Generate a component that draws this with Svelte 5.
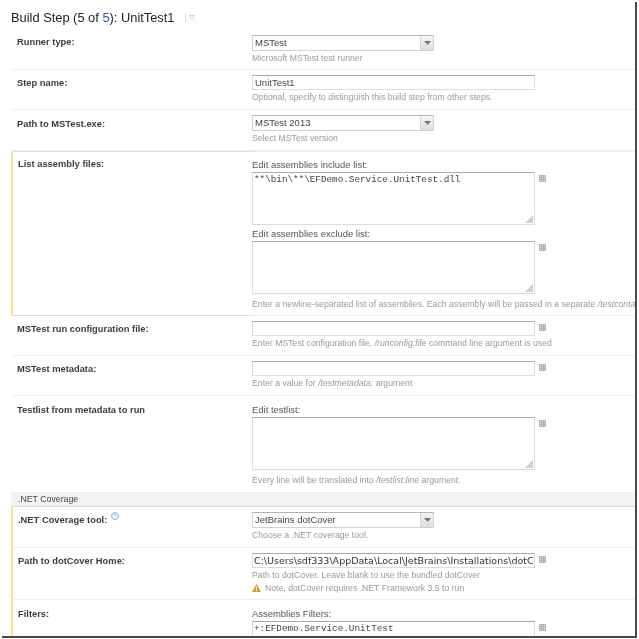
<script>
  const arrow = 'M0 0h7L3.5 4z';
</script>

{#snippet editor()}
  <svg class="editor-icon" width="7" height="7" viewBox="0 0 7 7" aria-hidden="true">
    <rect x="0.5" y="0.5" width="6" height="6" fill="#e2e2e2" stroke="#b4b4b4" />
    <path d="M2.5 1v5M4.5 1v5M1 2.5h5M1 4.5h5" stroke="#b0b0b0" fill="none" />
  </svg>
{/snippet}

{#snippet select(value)}
  <div class="select">
    <span class="select-value">{value}</span>
    <span class="select-btn">
      <svg width="7" height="4" viewBox="0 0 7 4"><path d={arrow} fill="#777" /></svg>
    </span>
  </div>
{/snippet}

{#snippet grip()}
  <svg class="grip" width="8" height="8" viewBox="0 0 8 8" aria-hidden="true">
    <path d="M8 0v8H0z" fill="#cfcfcf" />
  </svg>
{/snippet}

<div class="page">
  <h2 class="title">
    Build Step (5 of <span class="link">5</span>): UnitTest1
    <span class="sep"></span>
    <svg class="chevron" width="6" height="5" viewBox="0 0 6 5"><path d="M0.5 0.5h5L3 4.5z" fill="none" stroke="#c4d0dc" /></svg>
  </h2>

  <section class="row r-runner">
    <div class="label">Runner type:</div>
    <div class="field">
      {@render select('MSTest')}
      <div class="hint">Microsoft MSTest test runner</div>
    </div>
  </section>

  <section class="row r-step">
    <div class="label">Step name:</div>
    <div class="field">
      <div class="line"><div class="input sans">UnitTest1</div></div>
      <div class="hint">Optional, specify to distinguish this build step from other steps.</div>
    </div>
  </section>

  <section class="row r-path">
    <div class="label">Path to MSTest.exe:</div>
    <div class="field">
      {@render select('MSTest 2013')}
      <div class="hint">Select MSTest version</div>
    </div>
  </section>

  <section class="row r-list flagged">
    <div class="label">List assembly files:</div>
    <div class="field">
      <div class="caption">Edit assemblies include list:</div>
      <div class="line">
        <div class="textarea mono">**\bin\**\EFDemo.Service.UnitTest.dll{@render grip()}</div>
        {@render editor()}
      </div>
      <div class="caption second">Edit assemblies exclude list:</div>
      <div class="line">
        <div class="textarea">{@render grip()}</div>
        {@render editor()}
      </div>
      <div class="hint after-area">Enter a newline-separated list of assemblies. Each assembly will be passed in a separate <i>/testcontainer:</i> argument.</div>
    </div>
  </section>

  <section class="row r-plain">
    <div class="label">MSTest run configuration file:</div>
    <div class="field">
      <div class="line"><div class="input"></div>{@render editor()}</div>
      <div class="hint">Enter MSTest configuration file. <i>/runconfig:file</i> command line argument is used</div>
    </div>
  </section>

  <section class="row r-plain">
    <div class="label">MSTest metadata:</div>
    <div class="field">
      <div class="line"><div class="input"></div>{@render editor()}</div>
      <div class="hint">Enter a value for <i>/testmetadata:</i> argument</div>
    </div>
  </section>

  <section class="row r-testlist">
    <div class="label">Testlist from metadata to run</div>
    <div class="field">
      <div class="caption">Edit testlist:</div>
      <div class="line">
        <div class="textarea">{@render grip()}</div>
        {@render editor()}
      </div>
      <div class="hint after-area">Every line will be translated into <i>/testlist:line</i> argument.</div>
    </div>
  </section>

  <div class="group">.NET Coverage</div>

  <section class="row r-tool flagged">
    <div class="label">
      .NET Coverage tool:
      <svg class="help" width="8" height="8" viewBox="0 0 8 8"><circle cx="4" cy="4" r="3.4" fill="none" stroke="#7fa6c9" /><path d="M3 3.2c0-1.3 2-1.3 2 0 0 .8-1 .8-1 1.6" fill="none" stroke="#7fa6c9" stroke-width=".8" /></svg>
    </div>
    <div class="field">
      {@render select('JetBrains dotCover')}
      <div class="hint">Choose a .NET coverage tool.</div>
    </div>
  </section>

  <section class="row r-home flagged">
    <div class="label">Path to dotCover Home:</div>
    <div class="field">
      <div class="line">
        <div class="input path">C:\Users\sdf333\AppData\Local\JetBrains\Installations\dotCover01</div>
        {@render editor()}
      </div>
      <div class="hint">Path to dotCover. Leave blank to use the bundled dotCover</div>
      <div class="hint note">
        <svg width="9" height="8" viewBox="0 0 9 8"><path d="M4.5 0L9 8H0z" fill="#d9a01e" /><path d="M4.5 2.5v3M4.5 6v1" stroke="#fff" stroke-width=".9" /></svg>
        Note, dotCover requires .NET Framework 3.5 to run
      </div>
    </div>
  </section>

  <section class="row r-filters flagged">
    <div class="label">Filters:</div>
    <div class="field">
      <div class="caption">Assemblies Filters:</div>
      <div class="line">
        <div class="textarea mono">+:EFDemo.Service.UnitTest</div>
        {@render editor()}
      </div>
    </div>
  </section>
</div>

<style>
  :global(body) {
    margin: 0;
    background: #fff;
  }

  .page {
    box-sizing: border-box;
    width: 635px;
    height: 636px;
    margin: 2px 0 0 2px;
    overflow: hidden;
    border-right: 2px solid #4a4a4a;
    border-bottom: 2px solid #4a4a4a;
    font-family: "Liberation Sans", Arial, sans-serif;
    font-size: 9px;
    color: #333;
    filter: blur(0.3px);
  }

  .title {
    height: 28px;
    margin: 0;
    padding: 3px 0 0 9px;
    box-sizing: border-box;
    font-size: 12.85px;
    line-height: 17px;
    font-weight: 400;
    color: #222;
    display: flex;
    align-items: center;
    gap: 4px;
    white-space: pre-wrap;
  }

  .link {
    color: #1c5d99;
    margin: 0 -4px;
  }

  .sep {
    width: 1px;
    height: 9px;
    margin-left: 3px;
    background: #dedede;
  }

  .chevron {
    margin-left: -1px;
  }

  .row {
    display: grid;
    grid-template-columns: 241px 1fr;
    margin-left: 9px;
    border-bottom: 1px solid #eee;
    box-sizing: border-box;
    min-width: 0;
  }

  .r-runner { height: 40px; padding-top: 5px; }
  .r-step { height: 40px; padding-top: 5px; }
  .r-path { height: 41px; padding-top: 5px; }
  .r-list { height: 165px; border-top: 1px solid #f0f0f0; border-bottom-color: #eee; }
  .r-plain { height: 40px; padding-top: 5px; }
  .r-testlist { height: 96px; padding-top: 8px; border-bottom: none; }
  .r-tool { height: 41px; padding-top: 5px; }
  .r-home { height: 52px; padding-top: 5px; }
  .r-filters { height: 36px; padding-top: 8px; border-bottom: none; }

  .flagged {
    border-left: 2px solid #f6e58a;
  }

  .label {
    padding: 2px 0 0 6px;
    font-weight: 700;
    font-size: 9.35px;
    line-height: 12px;
    color: #3c3c3c;
    white-space: nowrap;
  }

  .flagged .label { padding-left: 5px; }
  .r-runner .label { padding-top: 1px; }
  .r-path .label { padding-top: 3px; }
  .r-testlist .label { padding-top: 0; }
  .r-tool .label { padding-top: 0; }
  .r-filters .label { padding-top: 0; }

  /* only the label half of this block has the stronger top and bottom rule */
  .r-list .label {
    padding-top: 6px;
    margin-top: -1px;
    margin-bottom: -1px;
    border-top: 1px solid #e0e0e0;
    border-bottom: 1px solid #dcdcdc;
  }

  .r-list .field {
    padding-top: 7px;
  }

  .field {
    min-width: 0;
    overflow: hidden;
  }

  .flagged .field {
    margin-left: -2px;
  }

  .select {
    width: 182px;
    height: 16px;
    box-sizing: border-box;
    border: 1px solid #d2d2d2;
    border-top-color: #b4b4b4;
    display: flex;
    justify-content: space-between;
  }

  .select-value {
    padding-left: 2px;
    line-height: 14px;
    font-size: 9.5px;
    font-weight: 400;
    color: #444;
  }

  .select-btn {
    width: 12px;
    background: linear-gradient(#f4f4f4, #dedede);
    border-left: 1px solid #d4d4d4;
    display: flex;
    align-items: center;
    justify-content: center;
  }

  .line {
    display: flex;
    align-items: flex-start;
    gap: 4px;
  }

  .input,
  .textarea {
    flex: none;
    width: 283px;
    box-sizing: border-box;
    border: 1px solid #dcdcdc;
    border-top-color: #a8a8a8;
    background: #fff;
    white-space: nowrap;
    overflow: hidden;
  }

  .input {
    height: 15px;
    line-height: 13px;
    padding-left: 2px;
    color: #444;
  }

  .textarea {
    height: 53px;
    position: relative;
    padding: 1px;
    line-height: 12px;
  }

  .sans {
    font-size: 9.5px;
  }

  .path {
    font-family: "DejaVu Sans", sans-serif;
    font-size: 9.53px;
    padding-left: 1px;
    color: #333;
  }

  .mono {
    font-family: "Liberation Mono", monospace;
    font-size: 9.3px;
    color: #444;
  }

  .r-filters .textarea {
    height: 30px;
  }

  .grip {
    position: absolute;
    right: 1px;
    bottom: 1px;
  }

  .editor-icon {
    margin-top: 3px;
  }

  .caption {
    height: 13px;
    line-height: 12px;
    font-size: 9.45px;
    color: #555;
  }

  .second {
    margin-top: 3px;
  }

  .hint {
    margin-top: 1px;
    height: 12px;
    line-height: 12px;
    font-size: 8.7px;
    color: #999;
    white-space: nowrap;
  }

  .after-area {
    margin-top: 4px;
  }

  .note {
    display: flex;
    align-items: center;
    gap: 4px;
    margin-top: 1px;
  }

  .group {
    height: 15px;
    margin-left: 9px;
    padding-left: 7px;
    box-sizing: border-box;
    background: #f3f3f3;
    border-top: 1px solid #eee;
    border-bottom: 1px solid #dcdcdc;
    line-height: 13px;
    font-size: 8.75px;
    color: #444;
  }

  .help {
    vertical-align: 3px;
    margin-left: 1px;
  }
</style>
